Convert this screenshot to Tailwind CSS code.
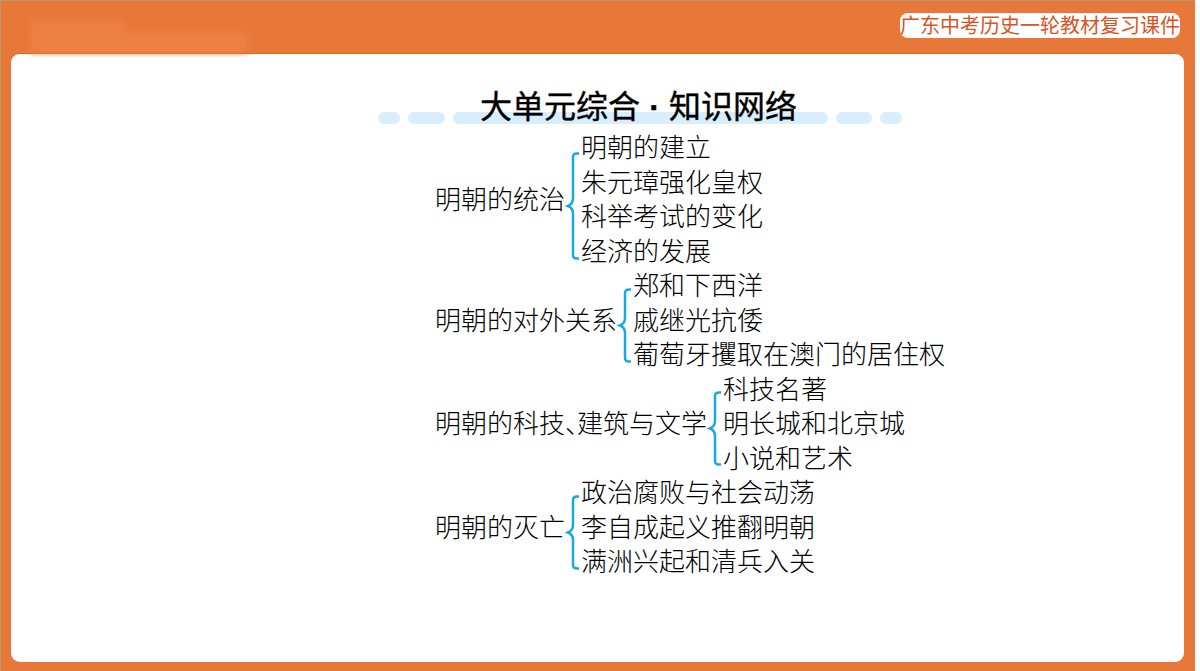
<!DOCTYPE html>
<html lang="zh-CN">
  <head>
    <meta charset="UTF-8" />
    <title>大单元综合·知识网络</title>
    <script src="https://cdn.jsdelivr.net/npm/@tailwindcss/browser@4"></script>
  </head>
  <body class="bg-white overflow-hidden font-['Liberation_Sans','Noto_Sans_CJK_SC',sans-serif]">
    <div class="w-[1195px] h-[671px] bg-[#e8783a] border-t border-l border-[#b89a68] flex flex-col overflow-hidden">
      <!-- header -->
      <div class="h-[52px] shrink-0 flex justify-between items-start pl-[29px] pr-[15px]">
        <div class="flex items-end h-[52px] blur-[3px]">
          <div class="w-[95px] h-[32px] bg-[#ed8043]"></div>
          <div class="w-[123px] h-[20px] bg-[#ed8043]"></div>
        </div>
        <div class="mt-[12px] w-[280px] h-[25px] bg-white rounded-[8px] text-[20px] leading-[26px] text-[#d9541e] text-center whitespace-nowrap">广东中考历史一轮教材复习课件</div>
      </div>

      <!-- card -->
      <div class="ml-[10px] w-[1173px] h-[609px] bg-white rounded-[9px] border-t border-[#e2621f] pl-[424px]">
        <div class="relative w-[530px] h-[38px] mt-[34px]">
          <div class="absolute left-[-57px] top-[24px] flex gap-[8px]">
            <div class="w-[22px] h-[12px] rounded-full bg-[#d9eefc]"></div>
            <div class="w-[37px] h-[12px] rounded-full bg-[#d9eefc]"></div>
            <div class="w-[375px] h-[12px] rounded-full bg-[#d9eefc]"></div>
            <div class="w-[36px] h-[12px] rounded-full bg-[#d9eefc]"></div>
            <div class="w-[22px] h-[12px] rounded-full bg-[#d9eefc]"></div>
          </div>
          <h1 class="relative ml-[45px] text-[32px] leading-[38px] font-normal text-black whitespace-nowrap flex [-webkit-text-stroke:0.4px_black]">大单元综合<span class="w-[29px] text-center font-bold">·</span>知识网络</h1>
        </div>

        <div class="mt-[5px] text-[26px] leading-[34.5px] text-black font-light whitespace-nowrap">
          <div class="flex items-center">
            <div>明朝的统治</div>
            <svg class="w-[16px] h-[108px] mt-[11px] shrink-0" viewBox="0 0 16 108" fill="none" stroke="#1aa7e8" stroke-width="2.5">
              <path d="M14 1.5H12Q8 1.5 8 5V46Q8 52 3 54Q8 56 8 62V103Q8 106.5 12 106.5H14" />
            </svg>
            <div>
              <div>明朝的建立</div>
              <div>朱元璋强化皇权</div>
              <div>科举考试的变化</div>
              <div>经济的发展</div>
            </div>
          </div>

          <div class="flex items-center">
            <div>明朝的对外关系</div>
            <svg class="w-[16px] h-[75px] mt-[9px] shrink-0" viewBox="0 0 16 75" fill="none" stroke="#1aa7e8" stroke-width="2.5">
              <path d="M14 1.5H12Q8 1.5 8 5V30Q8 35.5 3 37.5Q8 39.5 8 45V70Q8 73.5 12 73.5H14" />
            </svg>
            <div>
              <div>郑和下西洋</div>
              <div>戚继光抗倭</div>
              <div>葡萄牙攫取在澳门的居住权</div>
            </div>
          </div>

          <div class="flex items-center">
            <div>明朝的科技<span class="tracking-[-14px]">、</span>建筑与文学</div>
            <svg class="w-[16px] h-[75px] mt-[9px] shrink-0" viewBox="0 0 16 75" fill="none" stroke="#1aa7e8" stroke-width="2.5">
              <path d="M14 1.5H12Q8 1.5 8 5V30Q8 35.5 3 37.5Q8 39.5 8 45V70Q8 73.5 12 73.5H14" />
            </svg>
            <div>
              <div>科技名著</div>
              <div>明长城和北京城</div>
              <div>小说和艺术</div>
            </div>
          </div>

          <div class="flex items-center">
            <div>明朝的灭亡</div>
            <svg class="w-[16px] h-[75px] mt-[9px] shrink-0" viewBox="0 0 16 75" fill="none" stroke="#1aa7e8" stroke-width="2.5">
              <path d="M14 1.5H12Q8 1.5 8 5V30Q8 35.5 3 37.5Q8 39.5 8 45V70Q8 73.5 12 73.5H14" />
            </svg>
            <div>
              <div>政治腐败与社会动荡</div>
              <div>李自成起义推翻明朝</div>
              <div>满洲兴起和清兵入关</div>
            </div>
          </div>
        </div>
      </div>
    </div>
  </body>
</html>
